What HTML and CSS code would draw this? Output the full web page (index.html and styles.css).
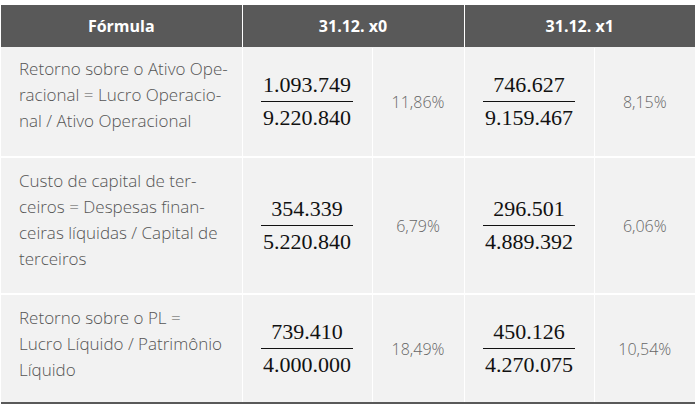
FILE: index.html
```html
<!DOCTYPE html>
<html lang="pt">
<head>
<meta charset="utf-8">
<link rel="stylesheet" href="styles.css">
</head>
<body>
<table class="tbl">
  <colgroup>
    <col class="c-form">
    <col class="c-frac">
    <col class="c-pct">
    <col class="c-frac">
    <col class="c-pct2">
  </colgroup>
  <thead>
    <tr>
      <th>Fórmula</th>
      <th colspan="2">31.12. x0</th>
      <th colspan="2">31.12. x1</th>
    </tr>
  </thead>
  <tbody>
    <tr class="r1">
      <td class="form">Retorno sobre o Ativo Ope-<br>racional = Lucro Operacio-<br>nal / Ativo Operacional</td>
      <td class="frac"><span class="fr"><span class="num">1.093.749</span><span class="den">9.220.840</span></span></td>
      <td class="pct">11,86%</td>
      <td class="frac"><span class="fr"><span class="num">746.627</span><span class="den">9.159.467</span></span></td>
      <td class="pct">8,15%</td>
    </tr>
    <tr class="r2">
      <td class="form">Custo de capital de ter-<br>ceiros = Despesas finan-<br>ceiras líquidas / Capital de<br>terceiros</td>
      <td class="frac"><span class="fr"><span class="num">354.339</span><span class="den">5.220.840</span></span></td>
      <td class="pct">6,79%</td>
      <td class="frac"><span class="fr"><span class="num">296.501</span><span class="den">4.889.392</span></span></td>
      <td class="pct">6,06%</td>
    </tr>
    <tr class="r3">
      <td class="form">Retorno sobre o PL =<br>Lucro Líquido / Patrimônio<br>Líquido</td>
      <td class="frac"><span class="fr"><span class="num">739.410</span><span class="den">4.000.000</span></span></td>
      <td class="pct">18,49%</td>
      <td class="frac"><span class="fr"><span class="num">450.126</span><span class="den">4.270.075</span></span></td>
      <td class="pct">10,54%</td>
    </tr>
  </tbody>
</table>
</body>
</html>
```
FILE: styles.css
```css
html, body {
  margin: 0;
  padding: 0;
  background: #ffffff;
}
body {
  padding: 5px 0 0 1px;
  font-family: "Open Sans", "Liberation Sans", sans-serif;
}
.tbl {
  border-collapse: collapse;
  width: 694px;
  table-layout: fixed;
  border-bottom: 2px solid #595959;
}
.c-form { width: 241px; }
.c-frac { width: 130px; }
.c-pct { width: 92px; }
.c-pct2 { width: 101px; }

.tbl thead tr { height: 42px; }
.tbl th {
  background: #595959;
  color: #ffffff;
  font-weight: 700;
  font-size: 16px;
  padding: 0;
  text-align: center;
  vertical-align: middle;
  border-left: 1px solid #ffffff;
  border-bottom: 1px solid #f2f2f2;
}
.tbl th:first-child { border-left: none; }

.tbl td {
  background: #f2f2f2;
  border-left: 1px solid #ffffff;
  border-top: 2px solid #ffffff;
  padding: 0;
}
.tbl td:first-child { border-left: none; }
.tbl tbody tr:first-child td { border-top: none; }

.r1 { height: 110px; }
.r2 { height: 137px; }
.r3 { height: 109px; }

.tbl td.form {
  vertical-align: top;
  padding: 8px 6px 0 18px;
  color: #555555;
  font-size: 17px;
  font-weight: 300;
  line-height: 26px;
}
.tbl .r2 td.form,
.tbl .r3 td.form {
  padding-top: 10px;
}
.pct {
  text-align: center;
  vertical-align: middle;
  color: #666666;
  font-size: 16px;
  font-weight: 300;
}
.frac {
  text-align: center;
  vertical-align: middle;
}
.fr {
  display: inline-flex;
  flex-direction: column;
  align-items: stretch;
  font-family: "Liberation Serif", "Times New Roman", serif;
  font-size: 22px;
  color: #111111;
  line-height: 30px;
}
.num {
  display: block;
  padding: 0 2px 1px;
  border-bottom: 1.5px solid #111111;
  text-align: center;
}
.den {
  display: block;
  padding: 1px 2px 0;
  text-align: center;
}
```
